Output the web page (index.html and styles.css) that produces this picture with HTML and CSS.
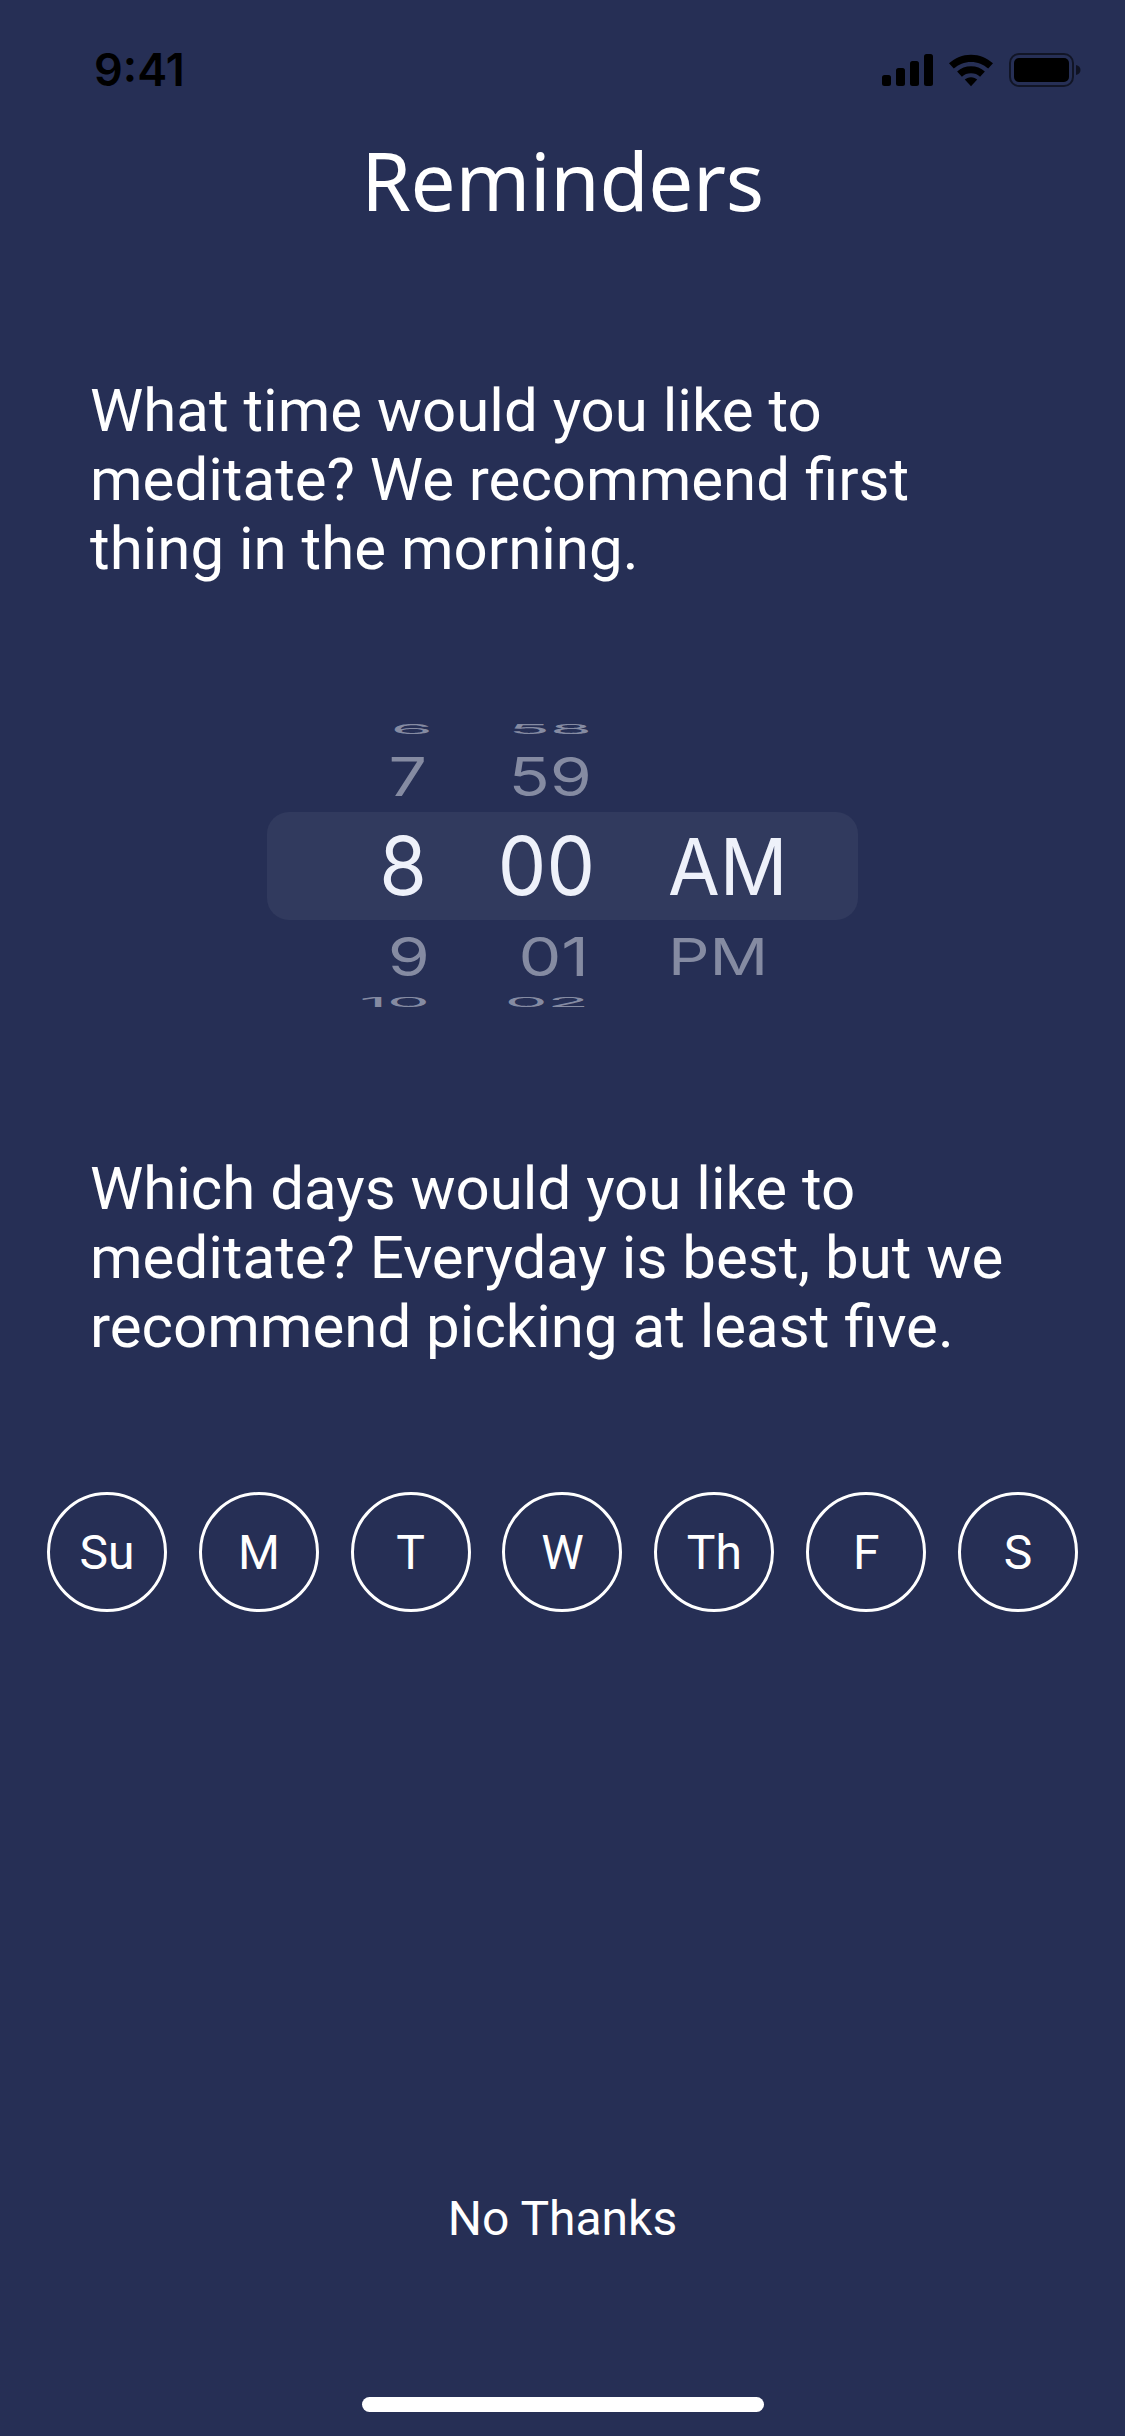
FILE: index.html
```html
<!DOCTYPE html>
<html lang="en">
<head>
<meta charset="utf-8">
<title>Reminders</title>
<link rel="stylesheet" href="styles.css">
</head>
<body>
<main class="screen">
  <header class="status">
    <span class="clock">9:41</span>
    <span class="status-icons">
      <svg class="signal" width="51" height="32" viewBox="0 0 51 32"><rect x="0" y="21" width="9" height="11" rx="2.500"/><rect x="14" y="14" width="9" height="18" rx="2.500"/><rect x="28" y="7" width="9" height="25" rx="2.500"/><rect x="42" y="0" width="9" height="32" rx="2.500"/></svg>
      <svg class="wifi" width="44" height="33" viewBox="0 0 46 33"><path d="M23 0C14 0 6.400 3.300 0 9l5 5.500C10 10 16 7.500 23 7.500S36 10 41 14.500L46 9C39.600 3.300 32 0 23 0Z"/><path d="M23 12c-5.500 0-10.500 2-14.500 5.500l5 5.500c2.500-2.300 5.800-3.500 9.500-3.500s7 1.200 9.500 3.500l5-5.500C33.500 14 28.500 12 23 12Z"/><path d="M23 23.500c-2.700 0-5 1-6.500 2.500L23 33l6.500-7c-1.500-1.500-3.800-2.500-6.500-2.500Z"/></svg>
      <svg class="battery" width="73" height="34" viewBox="0 0 73 34"><rect x="1" y="1" width="63" height="32" rx="9" fill="none" stroke="#000" stroke-opacity=".55" stroke-width="2"/><rect x="5" y="5" width="55" height="24" rx="5"/><path d="M67 12c3 .8 4.500 2.500 4.500 5s-1.500 4.200-4.500 5Z" opacity=".6"/></svg>
    </span>
  </header>

  <h1 class="title">Reminders</h1>

  <p class="prompt prompt-time">What time would you like to<br>meditate? We recommend first<br>thing in the morning.</p>

  <section class="picker" aria-label="Time picker">
    <div class="picker-band"></div>
    <div class="wheel wheel-hour">
      <div class="cell cell-far-top"><span>6</span></div>
      <div class="cell cell-near-top"><span>7</span></div>
      <div class="cell cell-mid"><span>8</span></div>
      <div class="cell cell-near-bottom"><span>9</span></div>
      <div class="cell cell-far-bottom"><span>10</span></div>
    </div>
    <div class="wheel wheel-min">
      <div class="cell cell-far-top"><span>58</span></div>
      <div class="cell cell-near-top"><span>59</span></div>
      <div class="cell cell-mid"><span>00</span></div>
      <div class="cell cell-near-bottom"><span>01</span></div>
      <div class="cell cell-far-bottom"><span>02</span></div>
    </div>
    <div class="wheel wheel-ampm">
      <div class="cell cell-far-top"></div>
      <div class="cell cell-near-top"></div>
      <div class="cell cell-mid"><span>AM</span></div>
      <div class="cell cell-near-bottom"><span>PM</span></div>
      <div class="cell cell-far-bottom"></div>
    </div>
  </section>

  <p class="prompt prompt-days">Which days would you like to<br>meditate? Everyday is best, but we<br>recommend picking at least five.</p>

  <div class="days">
    <button class="day">Su</button>
    <button class="day">M</button>
    <button class="day">T</button>
    <button class="day">W</button>
    <button class="day">Th</button>
    <button class="day">F</button>
    <button class="day">S</button>
  </div>

  <button class="dismiss">No Thanks</button>
  <div class="home-bar"></div>
</main>
</body>
</html>
```

FILE: styles.css
```css
* { box-sizing: border-box; }
html, body { margin: 0; padding: 0; }
body { background: #262f55; }
.screen {
  width: 1125px;
  height: 2436px;
  background: #262f55;
  color: #fff;
  font-family: Roboto, "Liberation Sans", sans-serif;
  display: flex;
  flex-direction: column;
  overflow: hidden;
}
.status {
  height: 40px;
  margin-top: 50px;
  padding: 0 43px 0 94px;
  display: flex;
  justify-content: space-between;
  align-items: center;
  color: #000;
}
.clock {
  font-family: Inter, "Liberation Sans", sans-serif;
  font-size: 45px;
  font-weight: 600;
  line-height: 40px;
}
.status-icons { display: flex; align-items: center; gap: 16px; }
.status-icons svg { display: block; fill: #000; }
.title {
  margin: 45px 0 0;
  font-family: "Noto Sans", Lato, sans-serif;
  font-size: 80px;
  font-weight: 400;
  letter-spacing: -.3px;
  line-height: 90px;
  text-align: center;
}
.prompt {
  margin: 0;
  padding-left: 90px;
  font-size: 60px;
  font-weight: 400;
  line-height: 69px;
}
.prompt-time { margin-top: 151px; }
.picker {
  position: relative;
  margin: 131px 0 0 267px;
  width: 591px;
  height: 303px;
  display: flex;
}
.picker-band {
  position: absolute;
  left: 0;
  top: 98px;
  width: 591px;
  height: 108px;
  border-radius: 22px;
  background: #313a5e;
}
.wheel { position: relative; display: flex; flex-direction: column; }
.wheel-hour { width: 160px; align-items: flex-end; }
.wheel-min { width: 168px; align-items: flex-end; }
.wheel-ampm { width: 263px; padding-left: 73px; align-items: flex-start; }
.cell { display: flex; align-items: center; justify-content: center; font-family: Inter, "Liberation Sans", sans-serif; color: #858ba2; line-height: 1; }
.cell span { display: block; white-space: nowrap; }
.cell-far-top { height: 30px; font-size: 68px; }
.cell-far-top span { transform: scaleY(.2); }
.cell-near-top { height: 63px; font-size: 68px; }
.cell-near-top span { transform: scaleY(.79); }
.cell-mid { height: 118px; font-size: 77px; color: #eef1fa; }
.cell-mid span { transform: scaleY(1.05); }
.cell-near-bottom { height: 62px; font-size: 68px; }
.cell-near-bottom span { transform: scaleY(.79); }
.cell-far-bottom { height: 30px; font-size: 68px; }
.cell-far-bottom span { transform: scaleY(.2); }
.wheel-hour .cell-far-top { margin-right: -6px; }
.wheel-hour .cell-near-bottom, .wheel-hour .cell-far-bottom { margin-right: -3px; }
.wheel-min .cell-near-top, .wheel-min .cell-far-top { margin-right: 3px; }
.wheel-min .cell-near-bottom, .wheel-min .cell-far-bottom { margin-right: 6px; }
.wheel-ampm .cell-mid { font-size: 75px; }
.wheel-ampm .cell-near-bottom { font-size: 65px; }
.prompt-days { margin-top: 137px; }
.days {
  margin-top: 131px;
  padding: 0 47px;
  display: flex;
  justify-content: space-between;
}
.day {
  width: 120px;
  height: 120px;
  padding: 0;
  border: 3px solid #fff;
  border-radius: 50%;
  background: transparent;
  color: #fff;
  font-family: Roboto, sans-serif;
  font-size: 48px;
}
.dismiss {
  margin: 579px auto 0;
  padding: 0;
  border: 0;
  background: none;
  color: #fff;
  font-family: Roboto, sans-serif;
  font-size: 48px;
  line-height: 56px;
}
.home-bar {
  width: 402px;
  height: 15px;
  margin: 150px auto 0;
  border-radius: 8px;
  background: #fff;
}
```
